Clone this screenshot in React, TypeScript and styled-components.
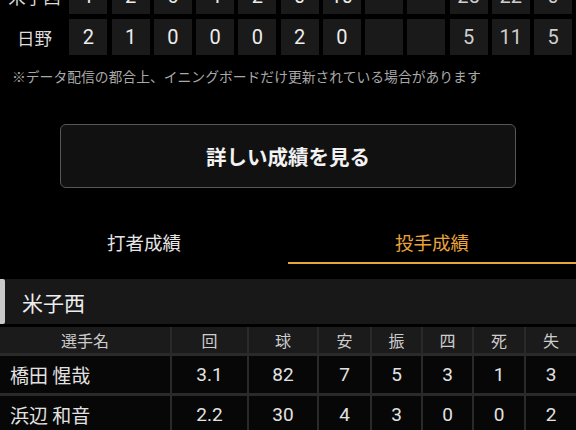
import styled, { createGlobalStyle } from 'styled-components';

interface ILine {
  team: string;
  innings: string[];
  runs: string;
  hits: string;
  errors: string;
}

interface IPitcher {
  name: string;
  stats: string[];
}

const LINES: ILine[] = [
  { team: '米子西', innings: ['1', '2', '6', '4', '2', '0', '10', '', ''], runs: '25', hits: '22', errors: '0' },
  { team: '日野', innings: ['2', '1', '0', '0', '0', '2', '0', '', ''], runs: '5', hits: '11', errors: '5' },
];

const COLUMNS = ['選手名', '回', '球', '安', '振', '四', '死', '失'];

const PITCHERS: IPitcher[] = [
  { name: '橋田 惺哉', stats: ['3.1', '82', '7', '5', '3', '1', '3'] },
  { name: '浜辺 和音', stats: ['2.2', '30', '4', '3', '0', '0', '2'] },
];

const GlobalStyle = createGlobalStyle`
  html, body {
    margin: 0;
    padding: 0;
    background: #000000;
    overflow: hidden;
  }

  body {
    font-family: Roboto, "Noto Sans CJK JP", sans-serif;
    color: #e6e6e6;
  }
`;

const App = () => {
  return (
    <Page>
      <GlobalStyle />
      <Scoreboard>
        {LINES.map((line) => (
          <ScoreRow key={line.team}>
            <TeamLabel>{line.team}</TeamLabel>
            {line.innings.map((value, index) => (
              <ScoreCell key={index}>{value}</ScoreCell>
            ))}
            <ScoreCell total>{line.runs}</ScoreCell>
            <ScoreCell total>{line.hits}</ScoreCell>
            <ScoreCell total>{line.errors}</ScoreCell>
          </ScoreRow>
        ))}
      </Scoreboard>

      <Note>※データ配信の都合上、イニングボードだけ更新されている場合があります</Note>

      <DetailButton>詳しい成績を見る</DetailButton>

      <Tabs>
        <Tab>打者成績</Tab>
        <Tab active>投手成績</Tab>
      </Tabs>

      <TeamHeader>米子西</TeamHeader>

      <StatsTable>
        {COLUMNS.map((column) => (
          <HeadCell key={column}>{column}</HeadCell>
        ))}
        {PITCHERS.map((pitcher) => (
          <Row key={pitcher.name}>
            <NameCell>{pitcher.name}</NameCell>
            {pitcher.stats.map((value, index) => (
              <StatCell key={index}>{value}</StatCell>
            ))}
          </Row>
        ))}
      </StatsTable>
    </Page>
  );
};

export default App;

const Page = styled.div`
  width: 576px;
  height: 430px;
  overflow: hidden;
  background: #000000;
`;

const Scoreboard = styled.div`
  margin-top: -22px;
  display: flex;
  flex-direction: column;
  gap: 5px;
`;

const ScoreRow = styled.div`
  display: grid;
  grid-template-columns: 65px repeat(12, 1fr);
  column-gap: 4.27px;
  padding-right: 4px;
  height: 36px;
`;

const TeamLabel = styled.div`
  display: flex;
  align-items: center;
  justify-content: center;
  padding-left: 4px;
  font-size: 17.5px;
  color: #dcdcdc;
`;

const ScoreCell = styled.div<{ total?: boolean }>`
  display: flex;
  align-items: center;
  justify-content: center;
  background: #1a1a1a;
  font-size: 20px;
  color: ${(props) => (props.total ? '#cfcfcf' : '#ededed')};
`;

const Note = styled.p`
  margin: 12px 0 0 12px;
  font-size: 13.8px;
  line-height: 20px;
  color: #a9a9a9;
  white-space: nowrap;
`;

const DetailButton = styled.button`
  display: block;
  width: 456px;
  height: 64px;
  margin: 37px auto 0;
  background: #111111;
  border: 1.5px solid #575757;
  border-radius: 6px;
  font-family: "Noto Sans CJK JP", sans-serif;
  font-size: 20.5px;
  font-weight: bold;
  color: #f2f2f2;
  cursor: pointer;
`;

const Tabs = styled.div`
  display: flex;
  margin-top: 34px;
`;

const Tab = styled.div<{ active?: boolean }>`
  flex: 1;
  height: 40px;
  display: flex;
  align-items: center;
  justify-content: center;
  font-family: "Noto Sans CJK JP", sans-serif;
  font-size: 18.5px;
  color: ${(props) => (props.active ? '#e9a43a' : '#e6e6e6')};
  border-bottom: 2px solid ${(props) => (props.active ? '#e9a43a' : 'transparent')};
`;

const TeamHeader = styled.div`
  position: relative;
  margin-top: 15px;
  height: 45px;
  display: flex;
  align-items: center;
  padding-left: 22px;
  background: #181818;
  font-family: "Noto Sans CJK JP", sans-serif;
  font-size: 21px;
  color: #ededed;

  &::before {
    content: '';
    position: absolute;
    left: 0;
    top: 0;
    bottom: 0;
    width: 5px;
    border-radius: 0 2px 2px 0;
    background: #c9c9c9;
  }
`;

const StatsTable = styled.div`
  margin-top: 3px;
  display: grid;
  grid-template-columns: 170px 75px 68px 51px 49px 49px 50px 50px;
  grid-auto-rows: 37px;
  grid-template-rows: 26px;
  column-gap: 2px;
  row-gap: 3px;
  background: #2a2a2a;
`;

const HeadCell = styled.div`
  display: flex;
  align-items: center;
  justify-content: center;
  background: #1b1b1b;
  font-family: "Noto Sans CJK JP", sans-serif;
  font-size: 16px;
  color: #cdcdcd;
`;

const Row = styled.div`
  display: contents;
`;

const NameCell = styled.div`
  display: flex;
  align-items: center;
  padding-left: 10px;
  background: #070707;
  font-family: "Noto Sans CJK JP", sans-serif;
  font-size: 19px;
  color: #e2e2e2;
`;

const StatCell = styled.div`
  display: flex;
  align-items: center;
  justify-content: center;
  background: #070707;
  font-size: 19px;
  color: #e2e2e2;
`;
